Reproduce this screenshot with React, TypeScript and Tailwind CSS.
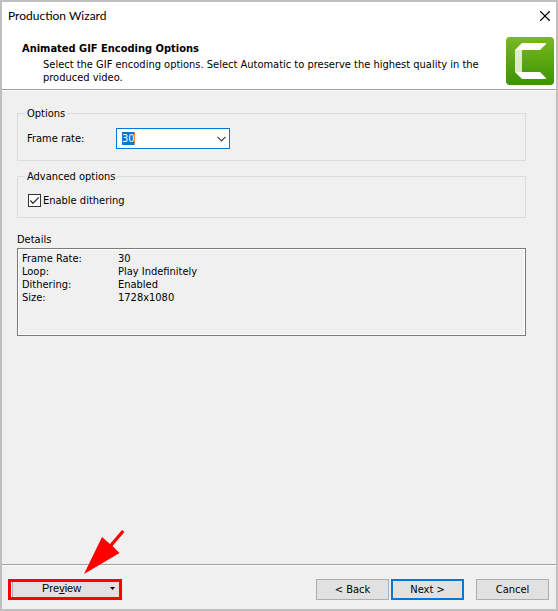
import { X } from 'lucide-react';

const DETAILS = [
  { label: 'Frame Rate:', value: '30' },
  { label: 'Loop:', value: 'Play Indefinitely' },
  { label: 'Dithering:', value: 'Enabled' },
  { label: 'Size:', value: '1728x1080' },
];

const FRAME_RATES = ['5', '10', '15', '20', '25', '30'];

function CamtasiaLogo() {
  return (
    <svg viewBox="0 0 48 48" className="size-12 shrink-0" aria-hidden="true">
      <defs>
        <linearGradient id="logo-green" x1="0" y1="0" x2="0" y2="1">
          <stop offset="0" stopColor="#7ab820" />
          <stop offset="1" stopColor="#3c9400" />
        </linearGradient>
      </defs>
      <rect width="48" height="48" rx="4" fill="url(#logo-green)" />
      <path d="M9 13h7v22H9z" fill="#fff" opacity="0.78" />
      <path d="M9 13l7-7h24v1l-6 6z" fill="#fff" />
      <path d="M9 35h25l6 6v1H16z" fill="#fff" />
    </svg>
  );
}

function TitleBar() {
  return (
    <div className="flex h-7 items-center justify-between pl-1.5 pr-[3px]">
      <h1 className="font-['Lato','Open_Sans',sans-serif] text-[12px] leading-4">Production Wizard</h1>
      <button type="button" aria-label="Close" className="flex size-4 items-center justify-center">
        <X size={18} strokeWidth={1.5} className="shrink-0" />
      </button>
    </div>
  );
}

function Header() {
  return (
    <header className="flex items-start justify-between border-b border-[#a0a0a0] pb-1 pl-5 pr-0.5 pt-[7px]">
      <div className="pt-1">
        <h2 className="font-bold leading-4">Animated GIF Encoding Options</h2>
        <p className="max-w-[470px] pl-[21px] pt-px">
          Select the GIF encoding options. Select Automatic to preserve the highest quality in the
          produced video.
        </p>
      </div>
      <CamtasiaLogo />
    </header>
  );
}

function Options() {
  return (
    <fieldset className="h-[54px] border border-[#dcdcdc] pl-[9px]">
      <legend className="-ml-0.5 px-0.5">Options</legend>
      <div className="flex items-center pt-2">
        <label htmlFor="frame-rate" className="w-[89px]">
          Frame rate:
        </label>
        <div className="grid w-[114px] items-center">
          <select
            id="frame-rate"
            defaultValue="30"
            className="col-start-1 row-start-1 h-[21px] appearance-none border border-[#0078d7] bg-white bg-[linear-gradient(to_right,#0078d7_12px,#f0873c_12px)] bg-[size:13px_13px] bg-[position:5px_3px] bg-no-repeat pl-[5px] leading-[13px] text-white outline-none"
          >
            {FRAME_RATES.map((rate) => (
              <option key={rate} className="bg-white text-black">
                {rate}
              </option>
            ))}
          </select>
          <svg
            viewBox="0 0 9 6"
            className="pointer-events-none col-start-1 row-start-1 mr-1 h-1.5 w-[9px] justify-self-end"
            fill="none"
            stroke="#444"
            strokeWidth="1.2"
            aria-hidden="true"
          >
            <path d="M.5.8l4 4 4-4" />
          </svg>
        </div>
      </div>
    </fieldset>
  );
}

function AdvancedOptions() {
  return (
    <fieldset className="mt-[9px] h-12 border border-[#dcdcdc] pl-[10px]">
      <legend className="-ml-[3px] px-0.5">Advanced options</legend>
      <label className="flex items-center gap-0.5 pt-[11px]">
        <span className="grid">
          <input
            type="checkbox"
            defaultChecked
            className="peer col-start-1 row-start-1 size-[13px] appearance-none border border-[#333] bg-white"
          />
          <svg
            viewBox="0 0 13 13"
            className="pointer-events-none invisible col-start-1 row-start-1 size-[13px] peer-checked:visible"
            fill="none"
            stroke="#333"
            strokeWidth="1.3"
            aria-hidden="true"
          >
            <path d="M2.3 6.5l2.7 2.8 5.8-5.9" />
          </svg>
        </span>
        Enable dithering
      </label>
    </fieldset>
  );
}

function Details() {
  return (
    <section className="mt-[15px]">
      <h3>Details</h3>
      <dl className="mt-0.5 grid h-[88px] grid-cols-[96px_1fr] content-start border border-[#7a7a7a] pl-1 pt-[3px] shadow-[inset_0_0_0_1px_#fff]">
        {DETAILS.map((d) => (
          <div key={d.label} className="contents">
            <dt>{d.label}</dt>
            <dd>{d.value}</dd>
          </div>
        ))}
      </dl>
    </section>
  );
}

function Footer() {
  return (
    <footer className="flex items-center border-t border-[#a0a0a0] pb-[9px] pl-1.5 pr-[7px] pt-[14px] shadow-[inset_0_1px_0_#fff]">
      <div className="relative">
        <button
          type="button"
          className="flex h-[21px] w-[114px] items-center border-3 border-[#f00] bg-[#e1e1e1] pb-0.5 pl-[31px] pr-1 font-['Liberation_Sans',sans-serif] shadow-[inset_1px_0_0_#f0f0f0,inset_2px_0_0_#adadad]"
        >
          <span>
            Pre<u>v</u>iew
          </span>
          <svg viewBox="0 0 5 3" className="ml-auto h-[3px] w-[5px]" aria-hidden="true">
            <path d="M0 0h5L2.5 3z" />
          </svg>
        </button>
        {/* Callout arrow pointing at the preview button */}
        <svg
          viewBox="0 0 42 46"
          className="pointer-events-none absolute bottom-[25px] left-[75px] h-[46px] w-[42px]"
          fill="#f00"
          aria-hidden="true"
        >
          <path d="M1 45L19 8l8 7L39 1l2.5 2L29.5 17l7 7z" />
        </svg>
      </div>
      <div className="ml-auto flex gap-0.5">
        <button type="button" className="h-[21px] w-[73px] border border-[#adadad] bg-[#e1e1e1]">
          &lt; Back
        </button>
        <button type="button" className="h-[21px] w-[73px] border-2 border-[#0078d7] bg-[#e1e1e1]">
          Next &gt;
        </button>
      </div>
      <button type="button" className="ml-3 h-[21px] w-[73px] border border-[#adadad] bg-[#e1e1e1]">
        Cancel
      </button>
    </footer>
  );
}

export default function App() {
  return (
    <div className="flex min-h-screen flex-col border-2 border-[#bfbfbf] bg-[#f0f0f0] font-['DejaVu_Sans_Condensed','Noto_Sans',sans-serif] text-[11px] leading-[13px] text-black">
      <div className="bg-white">
        <TitleBar />
        <Header />
      </div>
      <main className="flex-1 border-t border-white pl-[15px] pr-[30px] pt-4">
        <Options />
        <AdvancedOptions />
        <Details />
      </main>
      <Footer />
    </div>
  );
}
